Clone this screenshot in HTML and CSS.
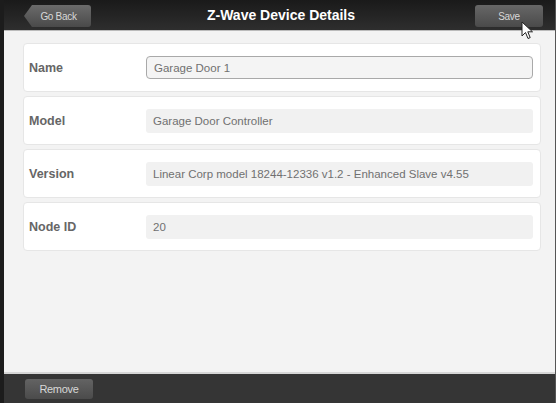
FILE: index.html
```html
<!DOCTYPE html>
<html lang="en">

<head>
    <meta charset="UTF-8">
    <meta name="viewport" content="width=device-width, initial-scale=1.0">
    <title>Z-Wave Device Details</title>
    <link rel="stylesheet" href="styles.css">
</head>

<body>
    <div class="app">
        <div class="header">
            <button class="back-btn">Go Back</button>
            <h1>Z-Wave Device Details</h1>
            <button class="save-btn">Save</button>
        </div>

        <div class="content">
            <div class="card">
                <label for="name">Name</label>
                <input type="text" id="name" class="value editable" value="Garage Door 1">
            </div>
            <div class="card">
                <label>Model</label>
                <div class="value">Garage Door Controller</div>
            </div>
            <div class="card">
                <label>Version</label>
                <div class="value">Linear Corp model 18244-12336 v1.2 - Enhanced Slave v4.55</div>
            </div>
            <div class="card">
                <label>Node ID</label>
                <div class="value">20</div>
            </div>
        </div>

        <div class="footer">
            <button class="remove-btn">Remove</button>
        </div>

        <svg class="cursor" width="14" height="20" viewBox="0 0 14 20">
            <path d="M1 1 L1 15 L4.5 11.5 L7 17.5 L9.2 16.6 L6.8 10.8 L11.5 10.8 Z" fill="#fff" stroke="#222" stroke-width="1" stroke-linejoin="round"/>
        </svg>
    </div>
</body>

</html>
```

FILE: styles.css
```css
body {
    margin: 0;
    padding: 0;
    font-family: 'Liberation Sans', Arial, sans-serif;
    background-color: #fff;
}

.app {
    position: relative;
    width: 551px;
    height: 403px;
    border-left: 4px solid #1c1c1c;
    border-right: 1px solid #555;
    display: flex;
    flex-direction: column;
    background-color: #f3f3f3;
}

.header {
    height: 31px;
    box-sizing: border-box;
    background: linear-gradient(#1a1a1a, #2e2e2e);
    border-bottom: 1px solid #bbb;
    display: flex;
    align-items: center;
    justify-content: space-between;
    padding: 0 12px 0 20px;
}

.header h1 {
    margin: 0;
    font-size: 14px;
    color: #fff;
    font-weight: bold;
    margin-right: 4px;
}

.header button,
.footer button {
    font-family: 'Liberation Sans', Arial, sans-serif;
    font-size: 10px;
    color: #d8d8d8;
    border: none;
    cursor: pointer;
    letter-spacing: -0.3px;
}

.back-btn {
    width: 67px;
    height: 22px;
    margin-top: 2px;
    padding-left: 8px;
    background: linear-gradient(#6b6b6b, #4a4a4a);
    clip-path: polygon(8px 0, 100% 0, 100% 100%, 8px 100%, 0 50%);
    border-radius: 0 3px 3px 0;
}

.save-btn {
    width: 68px;
    height: 22px;
    margin-top: 2px;
    background: linear-gradient(#676767, #4a4a4a);
    border-radius: 3px;
}

.content {
    flex: 1;
    padding: 12px 0 0 19px;
    display: flex;
    flex-direction: column;
    gap: 4px;
    border-bottom: 2px solid #d6d6d6;
}

.card {
    width: 518px;
    height: 49px;
    box-sizing: border-box;
    background-color: #fff;
    border: 1px solid #e6e6e6;
    border-radius: 4px;
    display: flex;
    align-items: center;
    padding: 0 7px 0 5px;
}

.card label {
    width: 117px;
    font-size: 12.5px;
    font-weight: bold;
    color: #666;
}

.value {
    flex: 1;
    height: 24px;
    box-sizing: border-box;
    background-color: #f1f1f1;
    border-radius: 3px;
    font-family: 'Liberation Sans', Arial, sans-serif;
    font-size: 11.5px;
    color: #707070;
    padding: 0 7px;
    display: flex;
    align-items: center;
}

.value.editable {
    height: 23px;
    border: 1px solid #a9a9a9;
    background-color: #f4f4f4;
    border-radius: 4px;
    outline: none;
}

.footer {
    height: 29px;
    background-color: #353535;
    display: flex;
    align-items: center;
    padding-left: 21px;
}

.remove-btn {
    width: 68px;
    height: 20px;
    background: linear-gradient(#636363, #4b4b4b);
    border-radius: 3px;
    font-size: 11px !important;
}

.cursor {
    position: absolute;
    left: 517px;
    top: 21px;
}
```
